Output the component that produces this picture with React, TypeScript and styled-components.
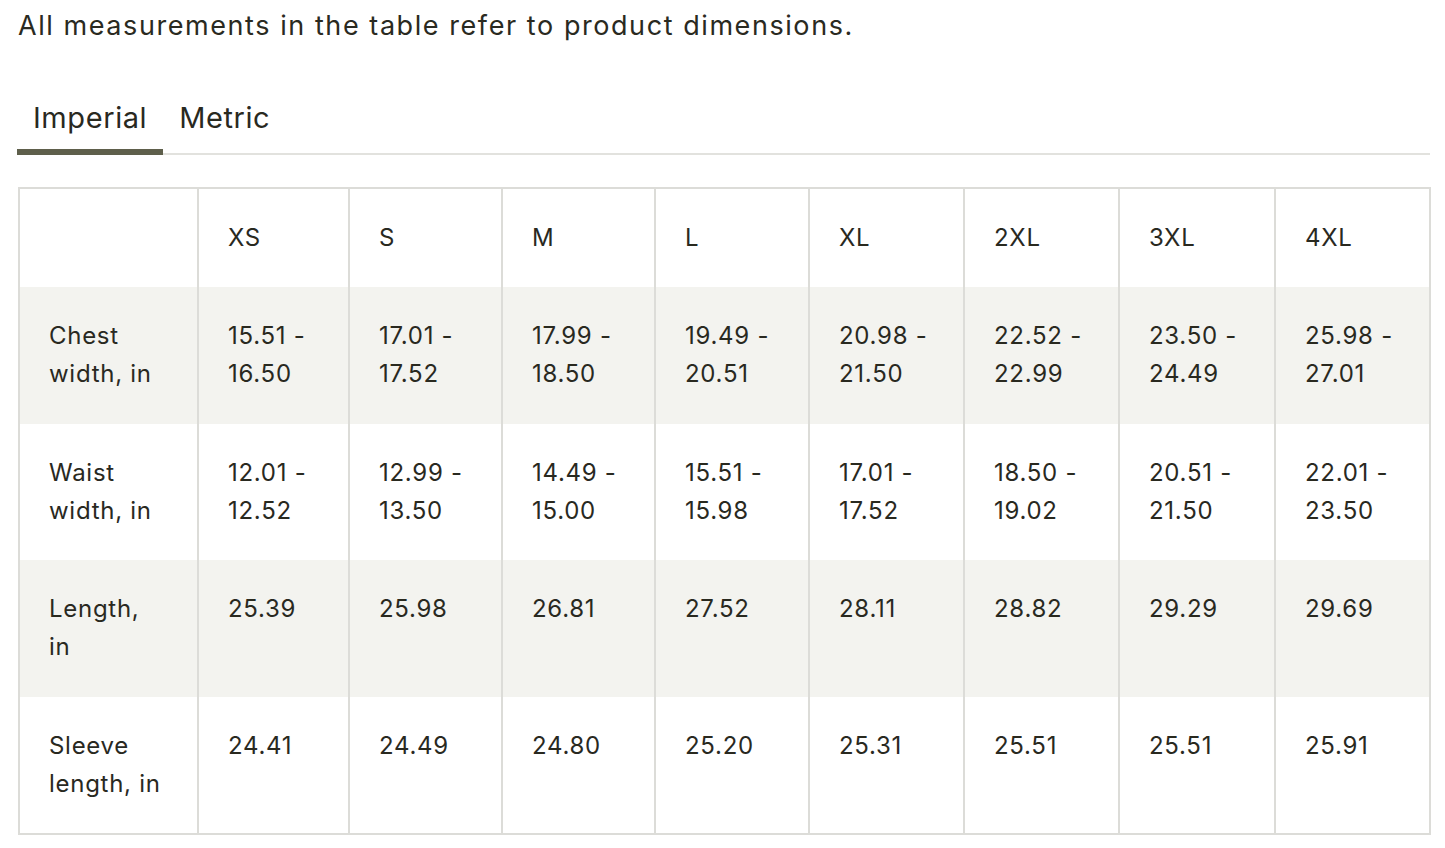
import React from "react";
import styled, { createGlobalStyle } from "styled-components";

const Global = createGlobalStyle`
  html, body { margin: 0; padding: 0; background: #ffffff; }
  body { font-family: Inter, "Noto Sans", sans-serif; color: #29291f; }
`;

const Page = styled.div`
  padding: 8px 15px 0 18px;
  display: flex;
  flex-direction: column;
`;

const Intro = styled.p`
  margin: 0;
  font-size: 27px;
  line-height: 36px;
  letter-spacing: 0.058em;
  color: #2a2a21;
`;

const TabBar = styled.div`
  display: flex;
  margin-top: 56px;
  margin-left: -1px;
  border-bottom: 2px solid #e2e2de;
`;

const Tab = styled.button<{ $active?: boolean }>`
  appearance: none;
  background: none;
  border: none;
  font-family: inherit;
  font-size: 29px;
  line-height: 36px;
  letter-spacing: 0.02em;
  color: #29291f;
  padding: 0 16px 13px;
  margin-bottom: -2px;
  border-bottom: 6px solid ${(p) => (p.$active ? "#5e5f4b" : "transparent")};
  cursor: pointer;
`;

const Table = styled.table`
  margin-top: 32px;
  width: 1411px;
  border-collapse: collapse;
  table-layout: fixed;
  border: 2px solid #dcdcd8;
`;

const Row = styled.tr<{ $shaded?: boolean }>`
  background: ${(p) => (p.$shaded ? "#f3f3ef" : "#ffffff")};
`;

const Cell = styled.td`
  padding: 30px 20px 30.5px 29px;
  font-size: 24px;
  line-height: 38px;
  letter-spacing: 0.03em;
  vertical-align: top;
  text-align: left;
  font-weight: 400;
  white-space: pre-line;
  border-left: 2px solid #dcdcd8;
  border-right: 2px solid #dcdcd8;
  color: #29291f;
`;

const HeadCell = styled(Cell).attrs({ as: "th" })`
  padding-bottom: 30px;
`;

const widths = [179, 151, 153, 153, 154, 155, 155, 156, 155];
const sizes = ["XS", "S", "M", "L", "XL", "2XL", "3XL", "4XL"];

const rows: { label: string; values: string[] }[] = [
  {
    label: "Chest\nwidth, in",
    values: [
      "15.51 -\n16.50",
      "17.01 -\n17.52",
      "17.99 -\n18.50",
      "19.49 -\n20.51",
      "20.98 -\n21.50",
      "22.52 -\n22.99",
      "23.50 -\n24.49",
      "25.98 -\n27.01",
    ],
  },
  {
    label: "Waist\nwidth, in",
    values: [
      "12.01 -\n12.52",
      "12.99 -\n13.50",
      "14.49 -\n15.00",
      "15.51 -\n15.98",
      "17.01 -\n17.52",
      "18.50 -\n19.02",
      "20.51 -\n21.50",
      "22.01 -\n23.50",
    ],
  },
  {
    label: "Length,\nin",
    values: ["25.39", "25.98", "26.81", "27.52", "28.11", "28.82", "29.29", "29.69"],
  },
  {
    label: "Sleeve\nlength, in",
    values: ["24.41", "24.49", "24.80", "25.20", "25.31", "25.51", "25.51", "25.91"],
  },
];

export default function App() {
  return (
    <>
      <Global />
      <Page>
        <Intro>All measurements in the table refer to product dimensions.</Intro>
        <TabBar>
          <Tab $active>Imperial</Tab>
          <Tab>Metric</Tab>
        </TabBar>
        <Table>
          <colgroup>
            {widths.map((w, i) => (
              <col key={i} style={{ width: w }} />
            ))}
          </colgroup>
          <thead>
            <Row>
              <HeadCell />
              {sizes.map((s) => (
                <HeadCell key={s}>{s}</HeadCell>
              ))}
            </Row>
          </thead>
          <tbody>
            {rows.map((r, i) => (
              <Row key={r.label} $shaded={i % 2 === 0}>
                <Cell>{r.label}</Cell>
                {r.values.map((v, j) => (
                  <Cell key={j}>{v}</Cell>
                ))}
              </Row>
            ))}
          </tbody>
        </Table>
      </Page>
    </>
  );
}
